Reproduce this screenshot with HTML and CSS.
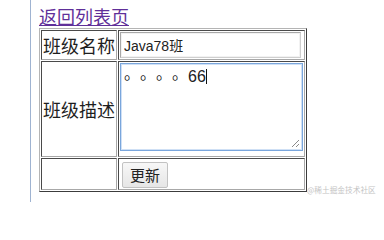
FILE: index.html
```html
<!DOCTYPE html>
<html lang="zh">
<head>
<meta charset="utf-8">
<title>更新班级</title>
<link rel="stylesheet" href="styles.css">
</head>
<body>
<div class="page">
  <a class="back" href="#">返回列表页</a>
  <table class="form">
    <tr class="row-name">
      <td class="label">班级名称</td>
      <td class="field"><input class="text" type="text" value="Java78班"></td>
    </tr>
    <tr class="row-desc">
      <td class="label">班级描述</td>
      <td class="field">
        <div class="area" role="textbox" aria-multiline="true">
          <div class="area-text"><span class="cjk">。。。。</span>66<span class="caret"></span></div>
          <svg class="grip" width="9" height="9" viewBox="0 0 9 9"><path d="M1 8 L8 1 M5 8 L8 5" stroke="#8a8a8a" stroke-width="1" fill="none"/></svg>
        </div>
      </td>
    </tr>
    <tr class="row-btn">
      <td class="label"></td>
      <td class="field"><button class="btn" type="button">更新</button></td>
    </tr>
  </table>
</div>
<div class="watermark">@稀土掘金技术社区</div>
</body>
</html>
```
FILE: styles.css
```css
html, body {
  margin: 0;
  padding: 0;
  background: #fff;
}
body {
  font-family: "Noto Sans CJK SC", "Liberation Sans", sans-serif;
  width: 384px;
  height: 202px;
  overflow: hidden;
  position: relative;
}
.page {
  margin-left: 30px;
  border-left: 1px solid #9fb3d1;
  height: 202px;
  box-sizing: border-box;
  padding: 5px 0 0 8px;
}
.back {
  display: block;
  width: max-content;
  font-size: 18px;
  line-height: 23px;
  color: #5f2f99;
  text-decoration: underline;
}
.form {
  border-collapse: separate;
  border-spacing: 1px;
  border: 1px solid;
  border-color: #b4b4b4 #3c3c3c #3c3c3c #b4b4b4;
}
.form td {
  border: 1px solid;
  border-color: #4a4a4a #a8a8a8 #a8a8a8 #4a4a4a;
  padding: 1px;
}
.label {
  width: 72px;
  font-size: 18px;
  line-height: 24px;
  color: #1e1e1e;
  text-align: center;
  vertical-align: middle;
  white-space: nowrap;
}
.field {
  width: 183px;
  vertical-align: top;
}
.text {
  display: block;
  box-sizing: border-box;
  width: 181px;
  height: 26px;
  margin: 0;
  padding: 0 3px;
  border: 1px solid;
  border-color: #a8a8a8 #cfcfcf #cfcfcf #a8a8a8;
  box-shadow: inset 0 0 0 1px #f2f2f2;
  font-family: "Liberation Sans", "Noto Sans CJK SC", sans-serif;
  font-size: 14px;
  color: #222;
  background: #fff;
}
.area {
  box-sizing: border-box;
  width: 183px;
  height: 88px;
  margin-bottom: 4px;
  border: 1px solid #7aa6dc;
  box-shadow: inset 0 0 0 1px #cfe0f5;
  display: flex;
  flex-direction: column;
  padding: 2px 2px 2px 3px;
}
.area-text {
  font-family: "Liberation Sans", "Noto Sans CJK SC", sans-serif;
  font-size: 16px;
  line-height: 18px;
  color: #222;
  text-spacing-trim: space-all;
}
.cjk {
  font-family: "Noto Sans CJK SC", sans-serif;
  text-spacing-trim: space-all;
  position: relative;
  top: -3px;
}
.caret {
  display: inline-block;
  width: 1px;
  height: 15px;
  background: #111;
  vertical-align: -2px;
}
.grip {
  display: block;
  margin-top: auto;
  align-self: flex-end;
}
.btn {
  display: block;
  box-sizing: border-box;
  height: 26px;
  margin: 2px 0 0 2px;
  padding: 0 7px;
  border: 1px solid #c2c2c2;
  border-radius: 2px;
  background: linear-gradient(#f7f7f7, #e6e6e6);
  font-family: "Noto Sans CJK SC", sans-serif;
  font-size: 15px;
  line-height: 22px;
  color: #222;
}
.watermark {
  position: absolute;
  left: 307px;
  top: 184px;
  font-size: 7.7px;
  line-height: 11px;
  color: #c4c4c4;
  white-space: nowrap;
}
```
